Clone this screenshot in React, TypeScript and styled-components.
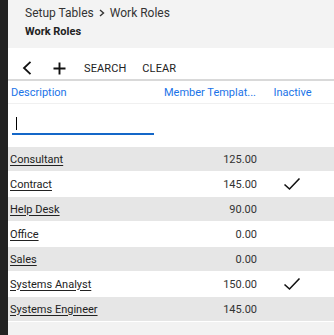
import React from "react";
import styled, { createGlobalStyle } from "styled-components";

const Global = createGlobalStyle`
  html, body { margin: 0; padding: 0; background: #222222; }
  body { font-family: Roboto, "Liberation Sans", sans-serif; }
  #root { height: 335px; }
`;

const Page = styled.div`
  display: flex;
  height: 335px;
  overflow: hidden;
`;

const Rail = styled.div`
  width: 8px;
  flex-shrink: 0;
  background: #222222;
`;

const Main = styled.main`
  flex: 1;
  display: flex;
  flex-direction: column;
  background: #f2f2f2;
  min-width: 0;
`;

const Header = styled.header`
  height: 48px;
  box-sizing: border-box;
  padding: 6px 0 0 17px;
  background: #f3f3f3;
`;

const Crumbs = styled.div`
  display: flex;
  align-items: center;
  gap: 4px;
  font-size: 12px;
  color: #333;
  line-height: 14px;
`;

const Title = styled.h1`
  margin: 5px 0 0;
  font-size: 11px;
  font-weight: 700;
  color: #222;
  line-height: 14px;
`;

const Toolbar = styled.div`
  display: flex;
  align-items: center;
  height: 33px;
  padding: 9px 0 0 12px;
  background: #fff;
  border-bottom: 2px solid #d9d9d9;
  box-sizing: border-box;
`;

const IconBtn = styled.button`
  display: flex;
  align-items: center;
  justify-content: center;
  width: 14px;
  height: 16px;
  padding: 0;
  border: none;
  background: none;
  margin-right: 18px;
`;

const TextBtn = styled.button`
  border: none;
  background: none;
  padding: 0;
  margin-right: 16px;
  font-family: inherit;
  font-size: 11px;
  color: #222;
  letter-spacing: 0.1px;
`;

const Grid = styled.div`
  display: grid;
  grid-template-columns: 150px 99px 1fr;
  background: #fff;
`;

const HeadCell = styled.div<{ $align?: string; $trail?: number }>`
  height: 22px;
  display: flex;
  align-items: center;
  justify-content: ${(p) => p.$align || "flex-start"};
  padding: 0 ${(p) => p.$trail ?? 3}px 0 3px;
  font-size: 11px;
  color: #1a73e8;
`;

const FilterRow = styled.div`
  grid-column: 1 / -1;
  height: 44px;
  box-sizing: border-box;
  padding: 12px 0 0 4px;
  border-top: 1px solid #f0f0f0;
`;

const FilterInput = styled.div`
  width: 142px;
  height: 17px;
  border-bottom: 2px solid #1467c8;
  position: relative;
  &::after {
    content: "";
    position: absolute;
    left: 4px;
    top: 1px;
    width: 1px;
    height: 13px;
    background: #000;
  }
`;

const Cell = styled.div<{ $odd: boolean; $align?: string; $trail?: number }>`
  height: 24px;
  margin-bottom: 1px;
  display: flex;
  align-items: center;
  justify-content: ${(p) => p.$align || "flex-start"};
  padding: 0 ${(p) => p.$trail ?? 2}px 0 2px;
  background: ${(p) => (p.$odd ? "#e6e6e6" : "#fff")};
  font-size: 11px;
  color: #333;
`;

const Link = styled.a`
  color: #222;
  text-decoration: underline;
  text-underline-offset: 2px;
`;

const rows = [
  { name: "Consultant", rate: "125.00", inactive: false },
  { name: "Contract", rate: "145.00", inactive: true },
  { name: "Help Desk", rate: "90.00", inactive: false },
  { name: "Office", rate: "0.00", inactive: false },
  { name: "Sales", rate: "0.00", inactive: false },
  { name: "Systems Analyst", rate: "150.00", inactive: true },
  { name: "Systems Engineer", rate: "145.00", inactive: false },
];

const Check = () => (
  <svg width="18" height="14" viewBox="0 0 18 14">
    <path d="M1.5 7.5 L6.5 12 L16.5 1.5" fill="none" stroke="#111" strokeWidth="1.6" />
  </svg>
);

export default function App() {
  return (
    <Page>
      <Global />
      <Rail />
      <Main>
        <Header>
          <Crumbs>
            <span>Setup Tables</span>
            <svg width="8" height="8" viewBox="0 0 8 8">
              <path d="M2 1 L5.5 4 L2 7" fill="none" stroke="#333" strokeWidth="1.4" />
            </svg>
            <span>Work Roles</span>
          </Crumbs>
          <Title>Work Roles</Title>
        </Header>
        <Toolbar>
          <IconBtn>
            <svg width="10" height="14" viewBox="0 0 10 14">
              <path d="M8.5 0.8 L2 7 L8.5 13.2" fill="none" stroke="#111" strokeWidth="1.8" />
            </svg>
          </IconBtn>
          <IconBtn>
            <svg width="13" height="13" viewBox="0 0 13 13">
              <path d="M6.5 0.5 V12.5 M0.5 6.5 H12.5" fill="none" stroke="#111" strokeWidth="1.9" />
            </svg>
          </IconBtn>
          <TextBtn>SEARCH</TextBtn>
          <TextBtn>CLEAR</TextBtn>
        </Toolbar>
        <Grid>
          <HeadCell>Description</HeadCell>
          <HeadCell $align="flex-end" $trail={1}>Member Templat...</HeadCell>
          <HeadCell $align="center" $trail={9}>Inactive</HeadCell>
          <FilterRow>
            <FilterInput />
          </FilterRow>
          {rows.map((r, i) => (
            <React.Fragment key={r.name}>
              <Cell $odd={i % 2 === 0}>
                <Link>{r.name}</Link>
              </Cell>
              <Cell $odd={i % 2 === 0} $align="flex-end" $trail={0}>
                {r.rate}
              </Cell>
              <Cell $odd={i % 2 === 0} $align="center" $trail={9}>
                {r.inactive && <Check />}
              </Cell>
            </React.Fragment>
          ))}
        </Grid>
      </Main>
    </Page>
  );
}
